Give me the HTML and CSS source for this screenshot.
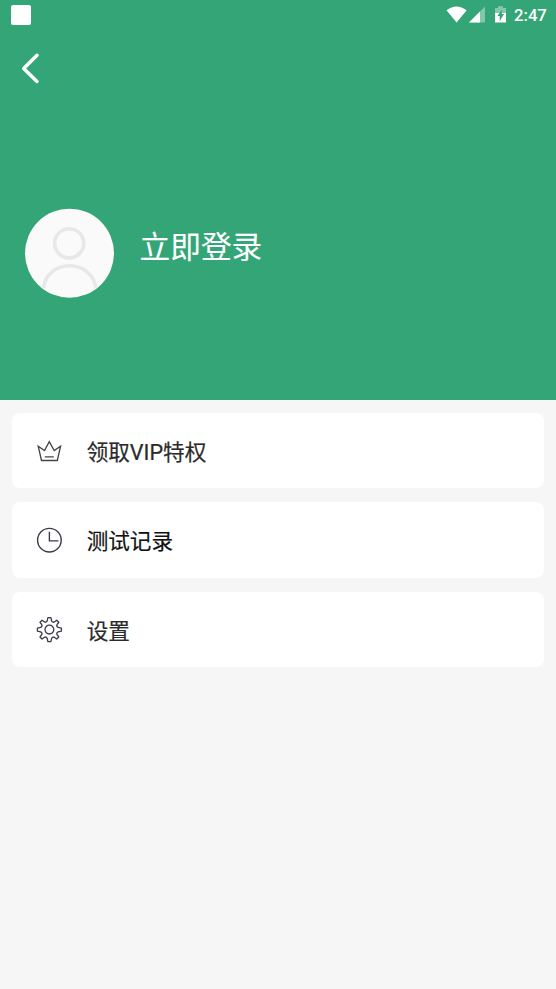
FILE: index.html
```html
<!DOCTYPE html>
<html lang="zh-CN">
<head>
<meta charset="utf-8">
<title>我的</title>
<link rel="stylesheet" href="styles.css">
</head>
<body>
<header class="hero">
  <div class="status">
    <span class="notice"></span>
    <svg class="indicators" width="64" height="20" viewBox="0 0 64 20" fill="#fff">
      <path d="M.5 5.3Q10.5-2.3 20.7 5.3L10.6 17.5Z"/>
      <path d="M39 1.5V17.5H23Z" opacity=".38"/>
      <path d="M34 6.5V17.5H23Z"/>
      <path d="M49 3h3V1.200h5V3h3v5H49Z" opacity=".4"/>
      <path d="M49 8h11v9.500H49Z"/>
      <path d="M55.8 4.8V9h2.300l-4.400 7v-5h-2.300Z" fill="#34a576"/>
    </svg>
    <span class="time">2:47</span>
  </div>
  <nav class="nav">
    <svg width="20" height="32" viewBox="0 0 20 32" fill="none" stroke="#fff" stroke-width="3.500" stroke-linecap="round" stroke-linejoin="round"><path d="M17 3.300 3.700 16.500 17 29.400"/></svg>
  </nav>
  <div class="profile">
    <svg class="avatar" width="90" height="90" viewBox="0 0 90 90">
      <circle cx="44.500" cy="45.200" r="44.500" fill="#fafafa"/>
      <g fill="none" stroke="#e8e8e8" stroke-width="3.600"><circle cx="44.200" cy="35.300" r="14.600"/><path d="M18.500 80C19.700 67 30.700 57.800 44.500 57.800S69.400 67 70.900 80"/></g>
    </svg>
    <span class="login">立即登录</span>
  </div>
</header>
<main class="menu">
  <div class="card vip">
    <svg class="icon" width="28" height="28" viewBox="-14 -14 28 28" fill="none" stroke="#444" stroke-width="1.300"><path d="M-7.500 9.500-10.800-4.800-4.500-.4.300-9.400 5.200-.4 11.600-4.800 8.300 9.500ZM-4.200 5.800H4.800"/></svg>
    <span>领取VIP特权</span>
  </div>
  <div class="card record">
    <svg class="icon" width="28" height="28" viewBox="-14.400 -14.200 28 28" fill="none" stroke="#3d3a4a" stroke-width="1.400"><circle r="11.800"/><path d="M0-8.500V.7H9"/></svg>
    <span>测试记录</span>
  </div>
  <div class="card settings">
    <svg class="icon" width="28" height="28" viewBox="-14.400 -13.600 28 28" fill="none" stroke="#3d3a4a" stroke-width="1.300" stroke-linejoin="round"><circle r="4.400"/><path d="M-1.500-12H1.500L2.200-8.800Q3.400-6.800 4.900-7.600L7.350-9.400 9.400-7.350 7.600-4.900Q6.800-3.400 8.800-2.200L12-1.500V1.500L8.800 2.200Q6.800 3.400 7.600 4.900L9.400 7.350 7.350 9.400 4.900 7.600Q3.400 6.800 2.200 8.800L1.500 12H-1.500L-2.200 8.800Q-3.400 6.800-4.900 7.600L-7.350 9.400-9.400 7.350-7.600 4.900Q-6.800 3.400-8.800 2.200L-12 1.500V-1.500L-8.800-2.200Q-6.800-3.400-7.600-4.900L-9.400-7.350-7.350-9.400-4.900-7.600Q-3.400-6.800-2.200-8.800Z"/></svg>
    <span>设置</span>
  </div>
</main>
</body>
</html>
```
FILE: styles.css
```css
* { box-sizing: border-box; }
body {
  margin: 0;
  min-height: 989px;
  background: #f6f6f6;
  font-family: Roboto, "Noto Sans CJK SC", sans-serif;
}
svg { display: block; flex: none; }
.hero {
  height: 400px;
  background: #34a576;
  color: #fff;
}
.status {
  display: flex;
  align-items: center;
  height: 30px;
  padding: 0 9px 0 11px;
}
.notice {
  width: 20px;
  height: 20px;
  border-radius: 2px;
  background: #fff;
}
.indicators { margin-left: auto; margin-top: -1px; }
.time {
  width: 33px;
  margin-left: 4px;
  padding-top: 1px;
  font-size: 16.700px;
  font-weight: 500;
  line-height: 21px;
  white-space: nowrap;
}
.nav { padding: 22px 0 0 20px; }
.profile {
  display: flex;
  align-items: center;
  padding: 124.400px 0 0 24.500px;
}
.login {
  margin: -10px 0 0 25px;
  font-size: 30.700px;
  line-height: 44px;
  -webkit-text-stroke: .1px currentColor;
}
.menu {
  display: flex;
  flex-direction: column;
  gap: 14px;
  padding: 12.500px 12px;
}
.card {
  display: flex;
  align-items: center;
  height: 75.600px;
  padding-left: 23.400px;
  border-radius: 8px;
  background: #fff;
  color: #2b2b2b;
  font-size: 21.600px;
  -webkit-text-stroke: .2px currentColor;
}
.icon { margin: 1px 0 0 .1px; }
.card span { margin: 0 0 0 23.200px; }
.record { color: #111; }
```
